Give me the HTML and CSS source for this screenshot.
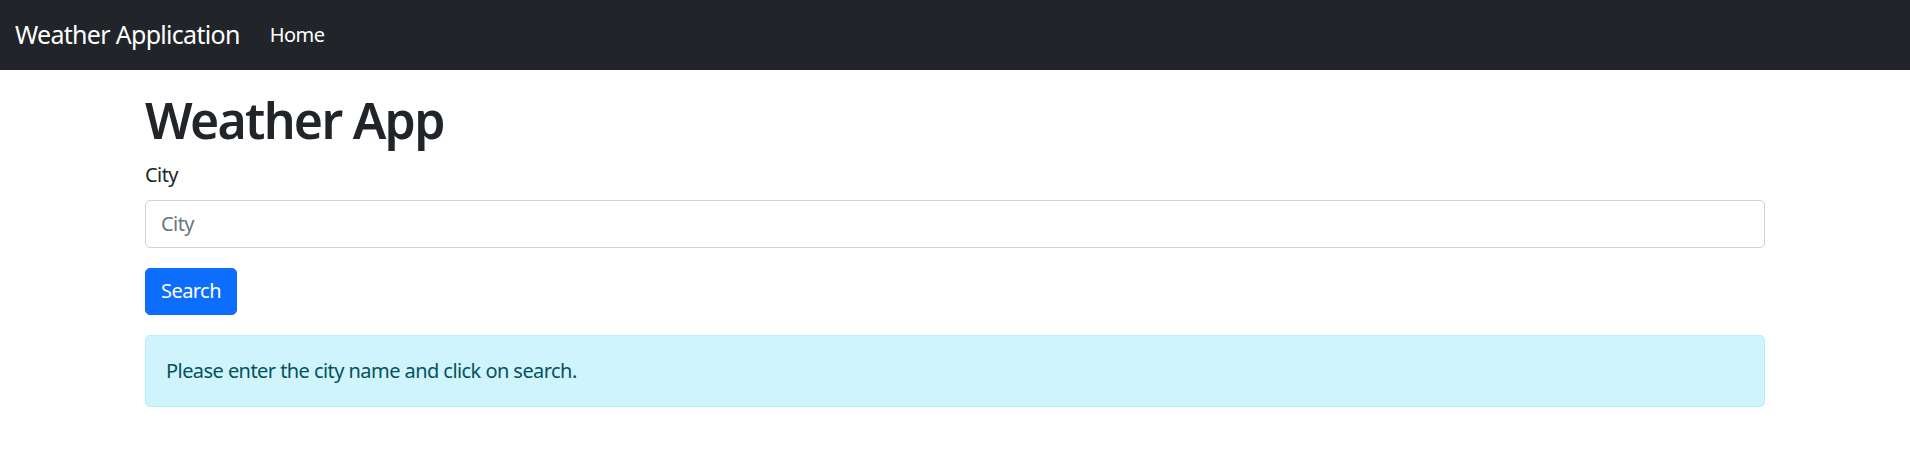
FILE: index.html
```html
<!DOCTYPE html>
<html lang="en">
<head>
<meta charset="utf-8">
<title>Weather App</title>
<link rel="stylesheet" href="styles.css">
</head>
<body>
<header>
  <nav class="navbar">
    <div class="navbar-inner">
      <a class="brand" href="#">Weather Application</a>
      <ul class="nav">
        <li><a class="nav-link" href="#">Home</a></li>
      </ul>
    </div>
  </nav>
</header>
<div class="container">
  <main class="main">
    <h1 class="title">Weather App</h1>
    <form class="search-form">
      <div class="field">
        <label class="form-label" for="city">City</label>
        <input class="form-control" id="city" type="text" placeholder="City">
      </div>
      <button class="btn-primary" type="button">Search</button>
    </form>
    <div class="alert-info">Please enter the city name and click on search.</div>
  </main>
</div>
</body>
</html>
```
FILE: styles.css
```css
* { box-sizing: border-box; }
html, body { margin: 0; padding: 0; }
body {
  font-family: "Noto Sans", "Open Sans", "Liberation Sans", sans-serif;
  font-size: 20px;
  line-height: 1.5;
  letter-spacing: -0.028em;
  color: #212529;
  background: #fff;
}
.navbar {
  background: #212529;
  height: 70px;
  margin-bottom: 20px;
  display: flex;
  align-items: center;
}
.navbar-inner {
  display: flex;
  align-items: center;
  padding: 0 15px;
  width: 100%;
}
.brand {
  color: #fff;
  text-decoration: none;
  font-size: 25px;
  line-height: 1.5;
  margin-right: 20px;
  white-space: nowrap;
  letter-spacing: -0.028em;
}
.nav {
  list-style: none;
  margin: 0;
  padding: 0;
  display: flex;
}
.nav-link {
  display: block;
  color: #fff;
  text-decoration: none;
  padding: 10px 10px;
  font-size: 20px;
}
.container {
  max-width: 1650px;
  margin: 0 auto;
  padding: 0 15px;
}
.main { padding-bottom: 20px; }
.title {
  margin: 0 0 10px;
  font-size: 50px;
  font-weight: 600;
  line-height: 1.2;
  letter-spacing: -0.034em;
}
.search-form { margin: 0; }
.field { margin-bottom: 20px; }
.form-label {
  display: inline-block;
  margin-bottom: 10px;
}
.form-control {
  display: block;
  width: 100%;
  height: 47.5px;
  padding: 7.5px 15px;
  font-family: inherit;
  font-size: 20px;
  line-height: 1.5;
  letter-spacing: inherit;
  color: #212529;
  background: #fff;
  border: 1px solid #ced4da;
  border-radius: 5px;
}
.form-control::placeholder { color: #6c757d; opacity: 1; }
.btn-primary {
  display: inline-block;
  height: 47.5px;
  padding: 7.5px 15px;
  font-family: inherit;
  font-size: 20px;
  line-height: 1.5;
  letter-spacing: inherit;
  color: #fff;
  background: #0d6efd;
  border: 1px solid #0d6efd;
  border-radius: 5px;
  cursor: pointer;
}
.alert-info {
  margin-top: 20px;
  padding: 20px;
  color: #055160;
  background: #cff4fc;
  border: 1px solid #b6effb;
  border-radius: 5px;
}
```
